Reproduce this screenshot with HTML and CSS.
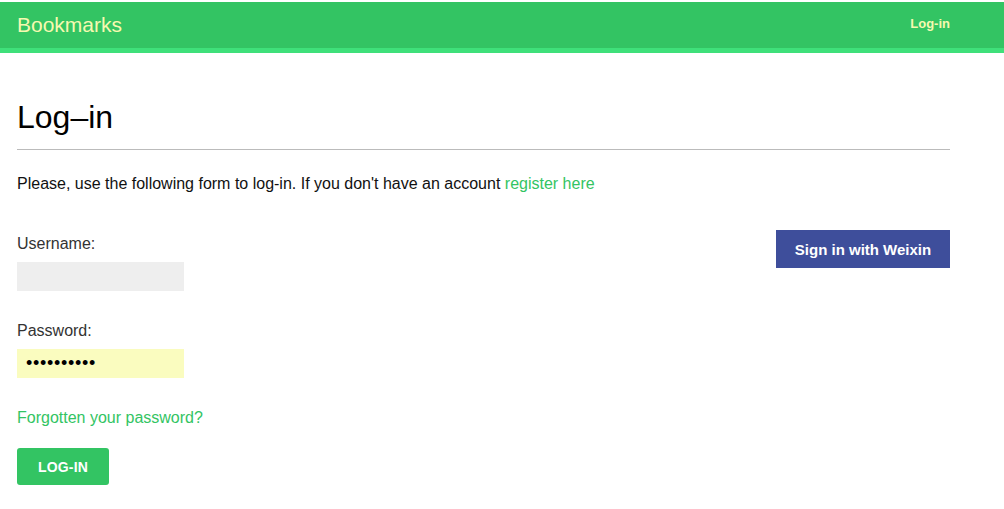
FILE: index.html
```html
<!DOCTYPE html>
<html>
<head>
<meta charset="utf-8">
<link rel="stylesheet" href="styles.css">
</head>
<body>
<header class="topbar">
  <span class="logo">Bookmarks</span>
  <a class="nav-link" href="#">Log-in</a>
</header>
<main class="content">
  <h1 class="title">Log–in</h1>
  <p class="intro">Please, use the following form to log-in. If you don't have an account <a class="link" href="#">register here</a></p>
  <div class="columns">
    <form class="login-form">
      <label class="field-label">Username:</label>
      <div class="input input-user"></div>
      <label class="field-label pw-label">Password:</label>
      <div class="input input-pass">••••••••••</div>
      <a class="link forgot" href="#">Forgotten your password?</a>
      <button class="btn-login" type="button">LOG-IN</button>
    </form>
    <div class="social">
      <a class="btn-weixin" href="#">Sign in with Weixin</a>
    </div>
  </div>
</main>
</body>
</html>
```
FILE: styles.css
```css
* { box-sizing: border-box; }
body {
  margin: 0;
  font-family: "Liberation Sans", Arial, sans-serif;
  color: #111;
  background: #fff;
}
.topbar {
  margin-top: 2px;
  height: 51px;
  background: #33c463;
  border-bottom: 5px solid #3fe07a;
  display: flex;
  align-items: center;
  justify-content: space-between;
  padding: 0 54px 0 17px;
}
.logo {
  color: #f6f9b0;
  font-size: 21px;
}
.nav-link {
  color: #f6f9b0;
  font-size: 13px;
  font-weight: bold;
  text-decoration: none;
  margin-top: -4px;
}
.content {
  padding: 0 54px 0 17px;
}
.title {
  margin: 44px 0 0;
  font-size: 32px;
  font-weight: normal;
  line-height: 40px;
  color: #000;
  padding-bottom: 12px;
  border-bottom: 1px solid #bbb;
}
.intro {
  margin: 24px 0 0;
  font-size: 16px;
  line-height: 20px;
  color: #111;
}
.link {
  color: #33c463;
  text-decoration: none;
}
.columns {
  display: flex;
  justify-content: space-between;
  align-items: flex-start;
}
.login-form {
  display: flex;
  flex-direction: column;
  align-items: flex-start;
  padding-top: 40px;
}
.field-label {
  font-size: 16px;
  line-height: 20px;
  color: #333;
}
.pw-label { margin-top: 30px; }
.input {
  width: 167px;
  height: 29px;
  margin-top: 8px;
  background: #eee;
}
.input-pass {
  background: #fafcbf;
  font-size: 18px;
  line-height: 29px;
  padding-left: 9px;
  letter-spacing: 0.7px;
  color: #000;
}
.forgot {
  margin-top: 30px;
  font-size: 16px;
  line-height: 20px;
}
.btn-login {
  margin-top: 20px;
  width: 92px;
  height: 37px;
  background: #33c463;
  color: #fff;
  border: none;
  border-radius: 3px;
  font-family: "Liberation Sans", Arial, sans-serif;
  font-weight: bold;
  font-size: 14px;
  letter-spacing: 0.2px;
}
.social {
  padding-top: 36px;
}
.btn-weixin {
  display: flex;
  align-items: center;
  justify-content: center;
  width: 174px;
  height: 38px;
  background: #3e4e9b;
  color: #fff;
  font-weight: bold;
  font-size: 15px;
  text-decoration: none;
}
```
